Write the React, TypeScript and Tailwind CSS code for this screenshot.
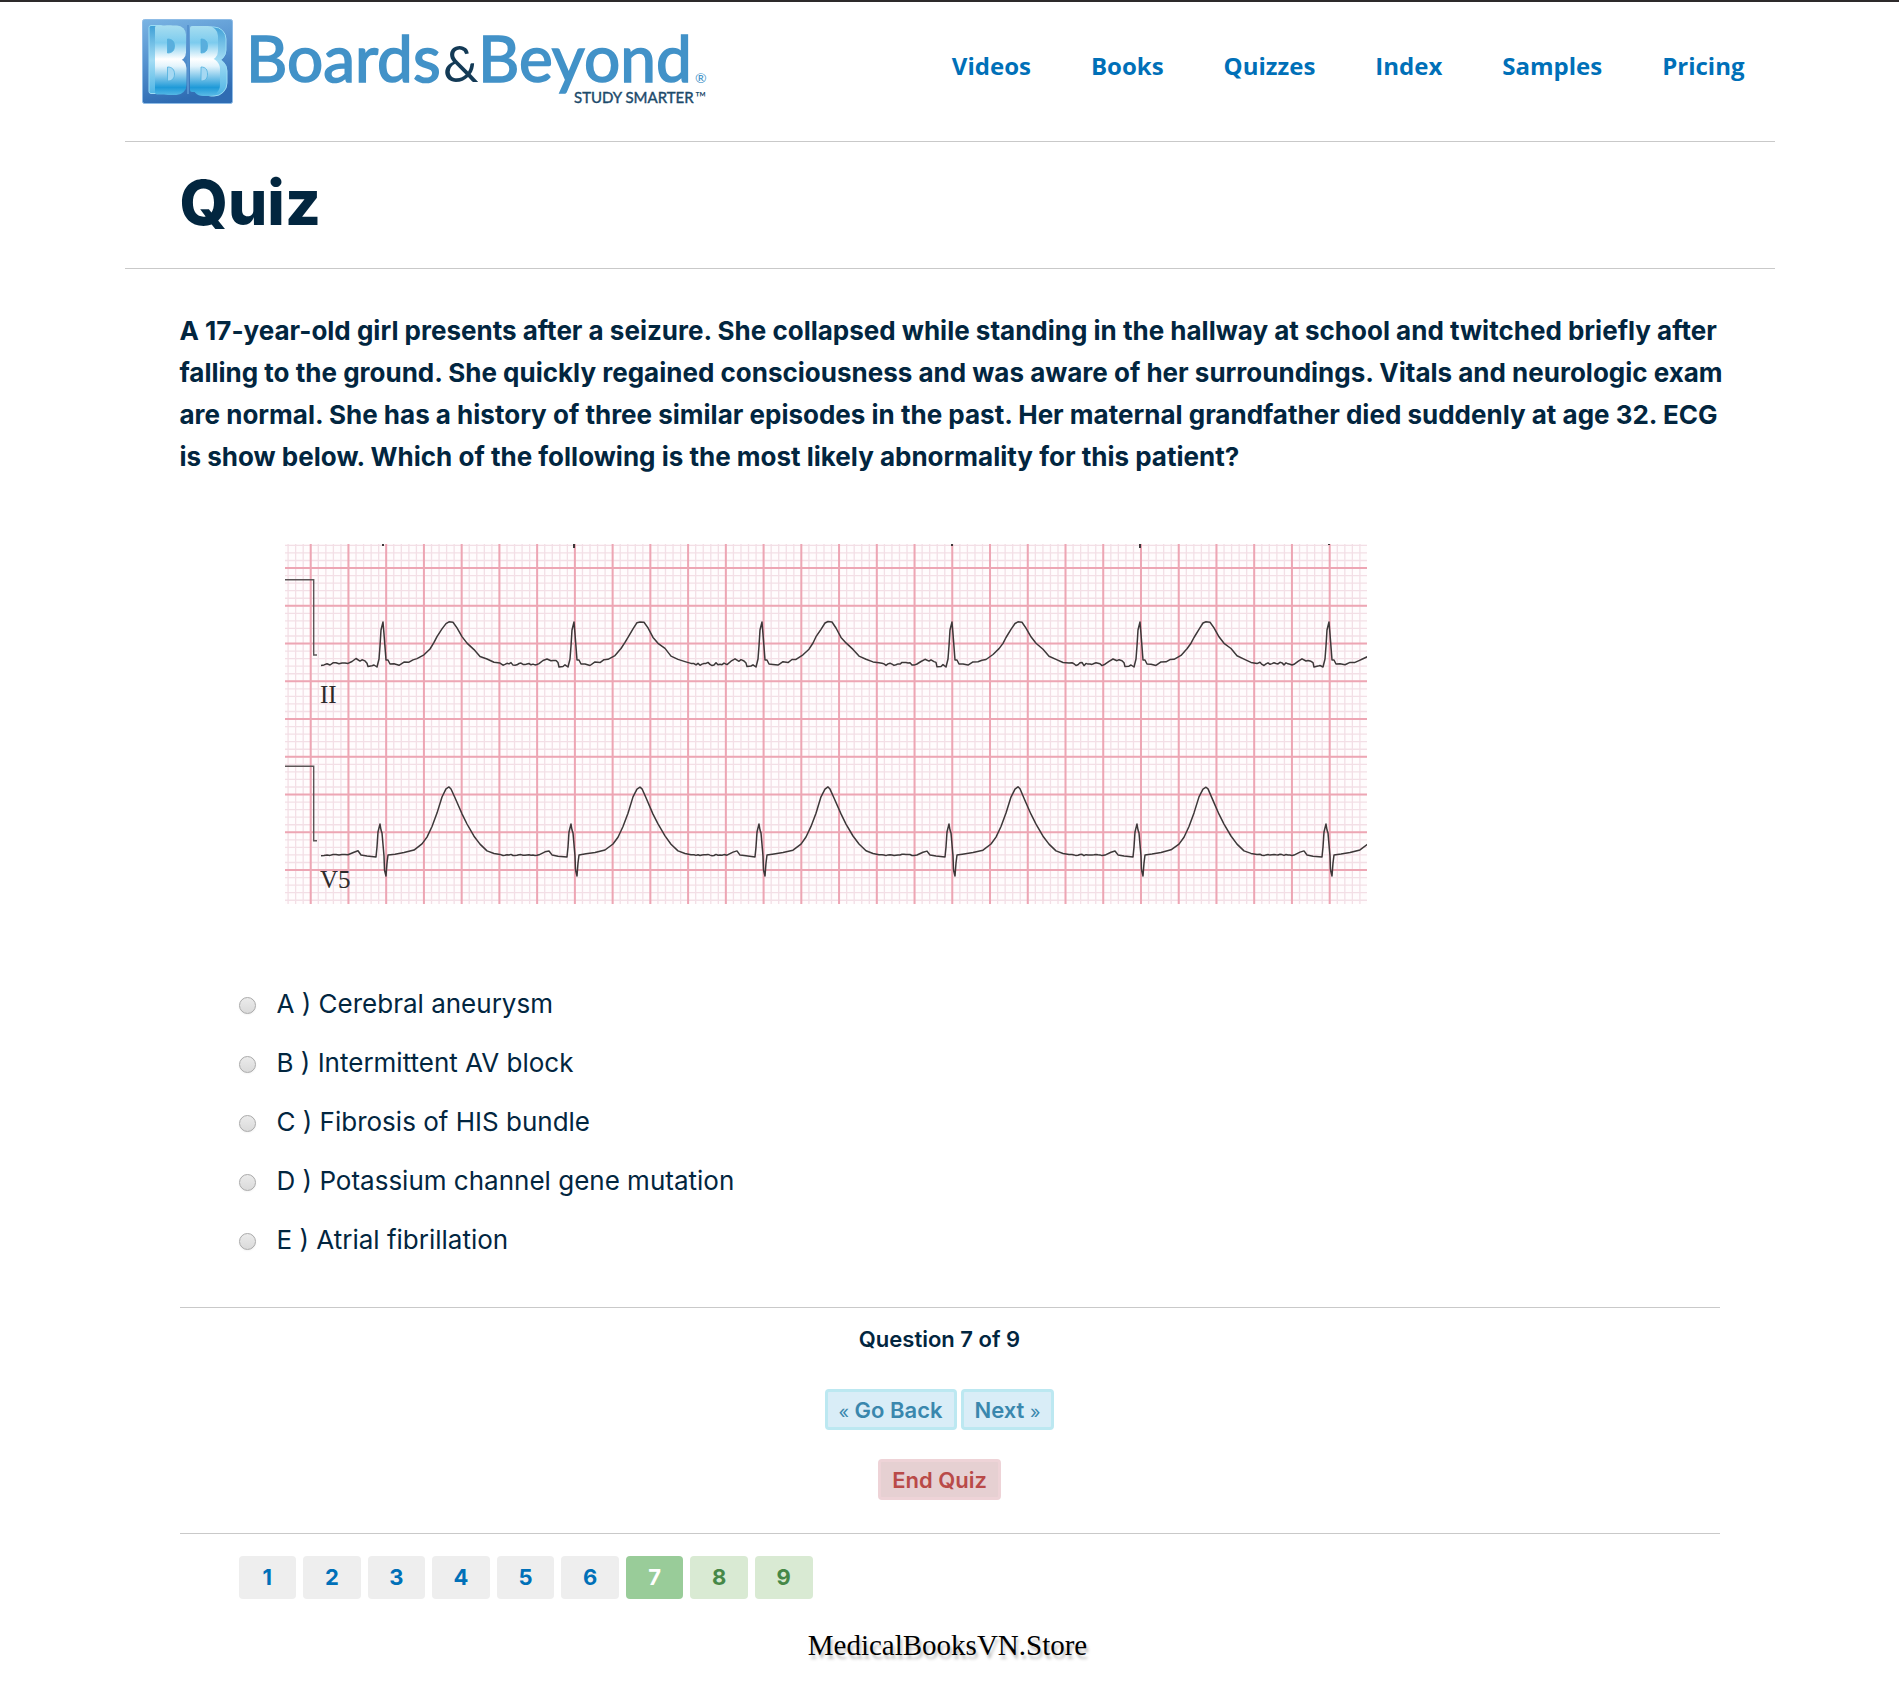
import { useState } from "react";

const NAV_LINKS = ["Videos", "Books", "Quizzes", "Index", "Samples", "Pricing"];

const OPTIONS = [
  { id: "A", label: "Cerebral aneurysm" },
  { id: "B", label: "Intermittent AV block" },
  { id: "C", label: "Fibrosis of HIS bundle" },
  { id: "D", label: "Potassium channel gene mutation" },
  { id: "E", label: "Atrial fibrillation" },
];

const PAGES = [1, 2, 3, 4, 5, 6, 7, 8, 9];
const CURRENT = 7;

/* ---------- ECG strip ---------- */

const ECG_W = 1082;
const ECG_H = 360;

type Point = [number, number];

// Beat shapes: x is the distance from the R wave, y is the height on the strip.
const LEAD_II: Point[] = [
  [-35, 120], [-31, 117], [-27, 115], [-23, 117], [-21, 116], [-18, 117], [-16, 119],
  [-15, 123], [-11, 122], [-9, 121], [-6, 123], [-4, 115], [-3, 102], [-2, 86], [0, 78],
  [1, 90], [3, 116], [5, 116], [7, 120], [11, 120], [16, 121], [21, 118], [26, 118],
  [30, 116], [34, 115], [41, 111], [47, 105], [51, 99], [54, 93], [59, 85], [63, 79],
  [66, 77.5], [70, 78.5], [74, 84], [79, 93], [84, 99], [91, 105], [97, 112], [104, 115],
  [111, 118], [117, 119],
];

const LEAD_V5: Point[] = [
  [-35, 311], [-29, 308], [-25, 307], [-22, 311], [-16, 312], [-7, 313], [-6, 303],
  [-5, 288], [-3, 280], [-2, 286], [-1, 289], [1, 312], [1.5, 326], [3, 332], [4, 319],
  [5, 311], [12, 310], [21, 308.5], [31, 306], [39, 300], [44, 293], [49, 282.5], [54, 269],
  [59, 253], [63, 245], [66, 243], [68, 245], [72, 254], [79, 270], [84, 280], [91, 292],
  [97, 300], [104, 307], [111, 309.5], [117, 310.5],
];

const BEATS = [98, 289, 477, 667, 855, 1044];

function jitter(seed: number) {
  const v = Math.sin(seed * 12.9898) * 43758.5453;
  return v - Math.floor(v) - 0.5;
}

function buildTrace(shape: Point[], rest: number, noise: number) {
  const pts: Point[] = [];
  for (let x = 36; x < BEATS[0] - 36; x += 3) pts.push([x, rest + jitter(x) * noise]);
  BEATS.forEach((beat, i) => {
    shape.forEach(([dx, y], k) => {
      const calm = dx > -8 && dx < 8 ? 0 : noise * 0.35;
      pts.push([beat + dx, y + jitter(i * 97 + k) * calm]);
    });
    const next = BEATS[i + 1] ?? ECG_W + 80;
    for (let x = beat + 120; x < next - 36; x += 2) {
      pts.push([x, rest + jitter(x + i) * noise]);
    }
  });
  return "M" + pts.map(([x, y]) => x.toFixed(1) + " " + y.toFixed(1)).join("L");
}

function gridLines(start: number, step: number, limit: number) {
  const out: number[] = [];
  for (let p = start; p < limit; p += step) out.push(p);
  return out;
}

function lines(vertical: number[], horizontal: number[]) {
  return (
    vertical.map((x) => "M" + x + " 0V" + ECG_H).join("") +
    horizontal.map((y) => "M0 " + y + "H" + ECG_W).join("")
  );
}

const FINE = lines(gridLines(3.1, 7.548, ECG_W), gridLines(1.4, 7.55, ECG_H));
const BOLD = lines(gridLines(25.7, 37.74, ECG_W), gridLines(24.1, 37.75, ECG_H));
const TRACE_II = buildTrace(LEAD_II, 120, 3.4);
const TRACE_V5 = buildTrace(LEAD_V5, 311, 1.4);

function EcgStrip() {
  return (
    <svg
      viewBox="0 0 1082 360"
      className="block w-full max-w-[1082px]"
      role="img"
      aria-label="ECG rhythm strip, leads II and V5"
    >
      <rect width={ECG_W} height={ECG_H} fill="#fffcfd" />
      <path d={FINE} stroke="#f3dfe6" strokeWidth="1.3" fill="none" />
      <path d={BOLD} stroke="#eda6b4" strokeWidth="2" fill="none" />
      <g fill="none" stroke="#5c5557" strokeWidth="1.4">
        <path d="M0 35.7H28.7V111H32" />
        <path d="M0 222.3H28.7V296.7H32" />
      </g>
      <g fill="none" stroke="#3d3839" strokeWidth="1.5" strokeLinejoin="round">
        <path d={TRACE_II} />
        <path d={TRACE_V5} />
        <path d="M98 0v2M289 0v4M667 0v2M855 0v4M1044 0v1" strokeWidth="2" />
      </g>
      <g fill="#2e2a2b" fontFamily="'Liberation Serif', serif" fontSize="25">
        <text x="35" y="159">II</text>
        <text x="35" y="344">V5</text>
      </g>
    </svg>
  );
}

/* ---------- Brand ---------- */

function Logo() {
  return (
    <svg viewBox="0 0 570 90" className="block w-[570px] shrink-0" role="img" aria-label="Boards & Beyond">
      <defs>
        <linearGradient id="tile" x1="0" y1="0" x2="0.25" y2="1">
          <stop offset="0" stopColor="#7ab4e3" />
          <stop offset="0.5" stopColor="#5592cf" />
          <stop offset="1" stopColor="#2f6cb3" />
        </linearGradient>
        <linearGradient id="face" gradientUnits="userSpaceOnUse" x1="0" y1="6" x2="0" y2="77">
          <stop offset="0" stopColor="#a9def0" />
          <stop offset="0.25" stopColor="#7ccbee" />
          <stop offset="0.48" stopColor="#ffffff" />
          <stop offset="0.58" stopColor="#e3f4fc" />
          <stop offset="0.88" stopColor="#1f9ad8" />
          <stop offset="1" stopColor="#5cbbe6" />
        </linearGradient>
        <linearGradient id="side" gradientUnits="userSpaceOnUse" x1="0" y1="6" x2="0" y2="77">
          <stop offset="0" stopColor="#3d9fd6" />
          <stop offset="0.5" stopColor="#a3dcf4" />
          <stop offset="1" stopColor="#4ab3e4" />
        </linearGradient>
      </defs>
      <rect x="0.5" y="0.5" width="90" height="84" rx="2" fill="url(#tile)" stroke="#8fbce6" />
      <g fill="url(#side)" stroke="#9bdcf5" strokeWidth="1">
        <rect x="7" y="6.5" width="14" height="68" rx="2" />
        <rect x="56" y="8" width="28" height="35" rx="12" />
        <rect x="56" y="39" width="29" height="38" rx="13" />
      </g>
      <g fill="url(#face)">
        <rect x="13" y="6.5" width="18" height="69" rx="2" />
        <rect x="16" y="6.5" width="28" height="36" rx="9" />
        <rect x="16" y="39" width="28.5" height="37" rx="10" />
        <rect x="48" y="7" width="17" height="66" rx="2" />
        <rect x="50" y="7" width="26" height="35" rx="10" />
        <rect x="50" y="39" width="28" height="38" rx="11" />
      </g>
      <g fill="#a5d8f2" stroke="#4fb0de" strokeWidth="0.8">
        <path d="M25.5 20c5 0 7 3 7 7s-2 7-7 7z" fill="#5aaedd" />
        <path d="M25.5 48c5 0 7 3 7 7s-2 7-7 7z" />
        <path d="M59 20c5 0 6.5 3 6.5 7s-1.5 7-6.5 7z" fill="#5aaedd" />
        <path d="M59 48c5 0 6.5 3 6.5 7s-1.5 7-6.5 7z" />
      </g>
      <path d="M46 6v69" stroke="#5592cf" strokeWidth="2" />
      <g fontFamily="Lato, sans-serif">
        <g fill="#4292c8" stroke="#4292c8" strokeWidth="1.6" fontSize="64">
          <text x="104" y="63">Boards</text>
          <text x="336" y="63">Beyond</text>
        </g>
        <text x="301" y="63" fontSize="50" fill="#133a56">&amp;</text>
        <text x="553" y="64" fontSize="14" fill="#4292c8">®</text>
        <text x="432" y="84" fontSize="15" fill="#1c4a6b" stroke="#1c4a6b" strokeWidth="0.4">STUDY SMARTER</text>
        <text x="553" y="84" fontSize="15" fill="#1c4a6b">™</text>
      </g>
    </svg>
  );
}

/* ---------- Page ---------- */

function pageStyle(page: number) {
  if (page === CURRENT) return "bg-[#99cc99] text-white";
  if (page > CURRENT) return "bg-[#d9ead3] text-[#468847]";
  return "bg-[#eeeeee] text-[#0070b8]";
}

export default function App() {
  const [answer, setAnswer] = useState("");
  return (
    <div className="min-h-screen border-t-2 border-[#2d2a2b] bg-white pb-10 font-[Inter,sans-serif] text-[#02263f]">
      <div className="mx-auto w-full max-w-[1650px]">
        <header className="flex items-start justify-between border-b border-[#c9c9c9] pt-[17px] pr-[30px] pb-8 pl-[17px]">
          <Logo />
          <nav className="flex gap-[60px] pt-[31px] font-['Open_Sans',sans-serif] text-2xl font-bold text-[#0070b8]">
            {NAV_LINKS.map((item) => (
              <a key={item} href="#">
                {item}
              </a>
            ))}
          </nav>
        </header>

        <div className="border-b border-[#c9c9c9] px-[55px] pt-[25px] pb-[29px]">
          <h1 className="text-[62px] leading-[72px] font-extrabold">Quiz</h1>
        </div>

        <main className="px-[55px] pt-[41px]">
          <p className="-mr-2 text-[26px] leading-[42px] font-bold">
            A 17-year-old girl presents after a seizure. She collapsed while standing in the hallway at school and
            twitched briefly after falling to the ground. She quickly regained consciousness and was aware of her
            surroundings. Vitals and neurologic exam are normal. She has a history of three similar episodes in the
            past. Her maternal grandfather died suddenly at age 32. ECG is show below. Which of the following is the
            most likely abnormality for this patient?
          </p>

          <div className="pt-[66px] pl-[105px]">
            <EcgStrip />
          </div>

          <div role="radiogroup" aria-label="Answers" className="pt-[70px] pl-[59px]">
            {OPTIONS.map(({ id, label }) => (
              <label key={id} className="flex h-[59px] items-center gap-[21px] text-[26px]">
                <input
                  type="radio"
                  name="answer"
                  value={id}
                  checked={answer === id}
                  onChange={() => setAnswer(id)}
                  className="mt-1 size-[17px] appearance-none rounded-full border border-[#a9a9a9] bg-linear-to-b from-[#ebebeb] to-[#dadada] shadow-xs checked:border-[5px]"
                />
                <span>
                  {id} ) {label}
                </span>
              </label>
            ))}
          </div>

          <section className="mt-[38px] border-y border-[#c9c9c9] pt-[15px] pr-5 pb-[33px] text-center text-[22px] font-semibold">
            <p className="leading-8">Question 7 of 9</p>
            <div className="mt-[34px] flex justify-center gap-1">
              <button className="h-[41px] rounded border-3 border-[#bce8f1] bg-[#d9edf7] px-[11px] leading-8 text-[#3a87ad]">
                <span className="text-lg font-normal">«</span> Go Back
              </button>
              <button className="h-[41px] rounded border-3 border-[#bce8f1] bg-[#d9edf7] px-[11px] leading-8 text-[#3a87ad]">
                Next <span className="text-lg font-normal">»</span>
              </button>
            </div>
            <button className="mt-[29px] h-[41px] rounded border-3 border-[#eed3d7] bg-[#e6d0d2] px-[11px] leading-8 text-[#b94a48]">
              End Quiz
            </button>
          </section>

          <nav aria-label="Questions" className="pt-[22px] pl-[59px]">
            <div className="grid w-full max-w-[574px] grid-cols-9 gap-[7px]">
              {PAGES.map((page) => (
                <a
                  key={page}
                  href="#"
                  className={
                    "flex h-[43px] items-center justify-center rounded text-[22px] font-bold " + pageStyle(page)
                  }
                >
                  {page}
                </a>
              ))}
            </div>
          </nav>
        </main>

        <footer className="pt-[26px] pr-1 text-center font-['Liberation_Serif',serif] text-[29px] leading-10 text-black text-shadow-[2px_4px_3px_rgb(0_0_0/0.25)]">
          MedicalBooksVN.Store
        </footer>
      </div>
    </div>
  );
}
